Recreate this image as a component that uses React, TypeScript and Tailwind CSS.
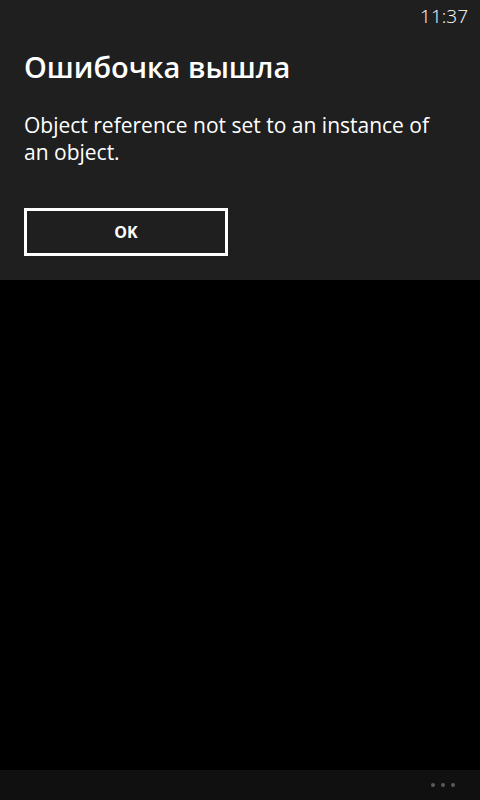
import React from "react";

export default function App() {
  return (
    <div className="w-[480px] h-[800px] bg-black flex flex-col text-white overflow-hidden" style={{ fontFamily: '"Open Sans", "Noto Sans", sans-serif' }}>
      <div className="bg-[#1f1f1f] h-[280px] flex flex-col px-6">
        <div className="flex justify-end h-[32px] pt-[3px] -mr-[12px]">
          <span className="text-[19px] leading-[26px] font-light">11:37</span>
        </div>
        <h1 className="mt-[17px] text-[29px] leading-[36px] font-semibold">Ошибочка вышла</h1>
        <p className="mt-[27px] text-[21px] leading-[27px]">Object reference not set to an instance of an object.</p>
        <button className="mt-[42px] w-[204px] h-[48px] border-[3px] border-white flex items-center justify-center text-[16px] font-bold">OK</button>
      </div>
      <div className="flex-1" />
      <div className="h-[30px] bg-[#101010] flex items-center justify-end gap-[6px] pr-[25px]">
        <span className="w-[4px] h-[4px] rounded-full bg-[#5a5a5a]" />
        <span className="w-[4px] h-[4px] rounded-full bg-[#5a5a5a]" />
        <span className="w-[4px] h-[4px] rounded-full bg-[#5a5a5a]" />
      </div>
    </div>
  );
}
